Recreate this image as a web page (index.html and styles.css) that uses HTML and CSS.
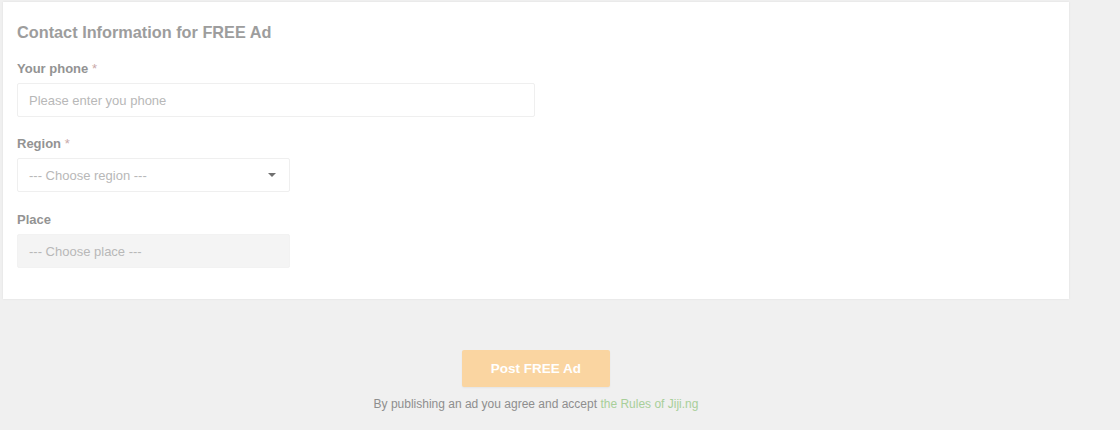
FILE: index.html
```html
<!DOCTYPE html>
<html>
<head>
<meta charset="utf-8">
<link rel="stylesheet" href="styles.css">
</head>
<body>
<div class="page">
  <div class="card">
    <h2 class="title">Contact Information for FREE Ad</h2>
    <div class="field">
      <div class="label">Your phone <span class="req">*</span></div>
      <div class="input wide"><span class="ph">Please enter you phone</span></div>
    </div>
    <div class="field">
      <div class="label">Region <span class="req">*</span></div>
      <div class="input select"><span class="ph">--- Choose region ---</span><span class="caret"></span></div>
    </div>
    <div class="field last">
      <div class="label">Place</div>
      <div class="input select disabled"><span class="ph">--- Choose place ---</span></div>
    </div>
  </div>
  <div class="footer">
    <div class="btn">Post FREE Ad</div>
    <div class="note">By publishing an ad you agree and accept <span class="link">the Rules of Jiji.ng</span></div>
  </div>
</div>
</body>
</html>
```
FILE: styles.css
```css
html, body {
  margin: 0;
  padding: 0;
  background: #f0f0f0;
  font-family: "Liberation Sans", Arial, sans-serif;
}
.page {
  width: 1066px;
  padding: 2px 0 0 3px;
}
.card {
  background: #fff;
  box-shadow: 0 0 2px rgba(0,0,0,0.08);
  padding: 20px 14px 31px;
  height: 246px;
}
.title {
  margin: 0 0 19px;
  font-size: 16.3px;
  line-height: 20px;
  font-weight: bold;
  color: #9d9d9d;
}
.field {
  margin-bottom: 19px;
}
.field.last {
  margin-top: 20px;
  margin-bottom: 0;
}
.label {
  font-size: 13px;
  line-height: 16px;
  font-weight: bold;
  color: #939393;
  margin-bottom: 6px;
}
.req {
  color: #c9a8a8;
  font-weight: normal;
}
.input {
  box-sizing: border-box;
  height: 34px;
  border: 1px solid #efefef;
  border-radius: 2px;
  display: flex;
  align-items: center;
  padding: 0 11px;
  font-size: 13px;
  background: #fff;
}
.input.wide {
  width: 518px;
}
.input.select {
  width: 273px;
  justify-content: space-between;
}
.input.disabled {
  background: #f4f4f4;
  border-color: #f2f2f2;
}
.ph {
  color: #b8b8b8;
}
.caret {
  width: 0;
  height: 0;
  border-left: 4px solid transparent;
  border-right: 4px solid transparent;
  border-top: 4px solid #707070;
  margin-right: 2px;
}
.footer {
  display: flex;
  flex-direction: column;
  align-items: center;
  padding-top: 51px;
}
.btn {
  width: 148px;
  height: 37px;
  border-radius: 2px;
  background: #fad5a1;
  color: #fff;
  font-size: 13.5px;
  font-weight: bold;
  display: flex;
  align-items: center;
  justify-content: center;
  box-shadow: 0 1px 2px rgba(0,0,0,0.05);
}
.note {
  margin-top: 10px;
  font-size: 12px;
  line-height: 14px;
  color: #8e8e8e;
}
.link {
  color: #a8cf9a;
}
```
